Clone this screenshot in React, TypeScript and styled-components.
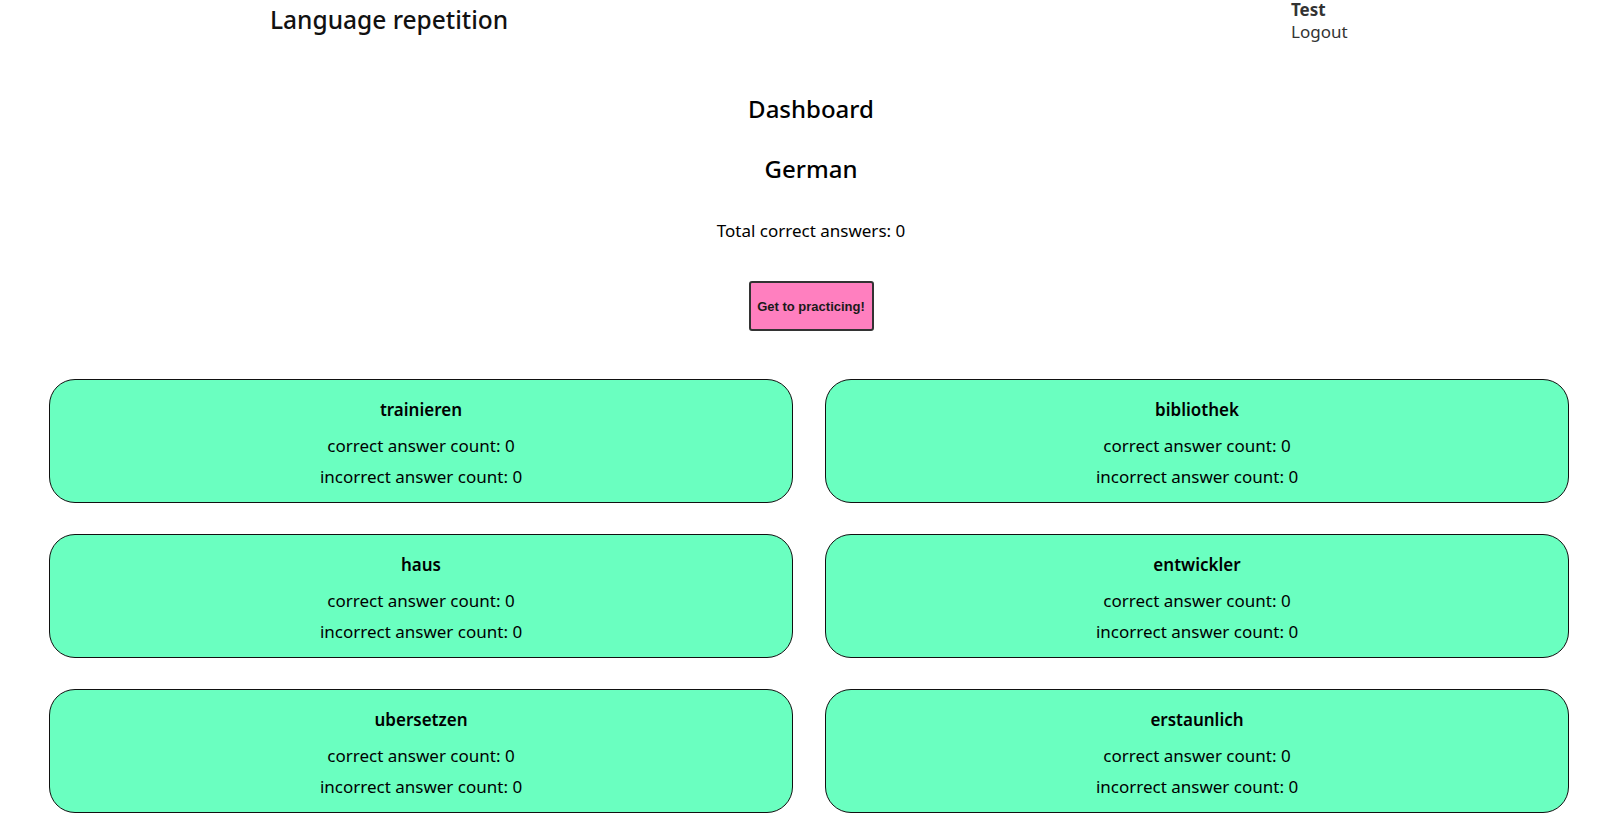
import React from 'react';
import styled, { createGlobalStyle } from 'styled-components';

const GlobalStyle = createGlobalStyle`
    body {
        margin: 0;
        font-family: "Noto Sans", "Open Sans", sans-serif;
        color: #000;
        background: #fff;
    }
`;

const Header = styled.header`
    display: flex;
    justify-content: space-between;
    align-items: flex-start;
    padding: 0 273px 0 270px;
    height: 44px;
`;

const AppTitle = styled.div`
    font-size: 24.5px;
    font-weight: 500;
    line-height: 40px;
    color: #111;
`;

const UserBox = styled.div`
    display: flex;
    flex-direction: column;
    font-size: 17px;
    line-height: 22px;
    color: #333;
    margin-top: -1px;
    width: 58px;
`;

const UserName = styled.div`
    font-weight: bold;
`;

const LogoutLink = styled.a`
    color: #333;
    text-decoration: none;
    cursor: pointer;
`;

const Main = styled.main`
    display: flex;
    flex-direction: column;
    align-items: center;
`;

const PageTitle = styled.h2`
    font-size: 24px;
    font-weight: 500;
    margin: 49px 0 0;
    line-height: 32px;
`;

const LanguageTitle = styled.h2`
    font-size: 24px;
    font-weight: 500;
    margin: 28px 0 0;
    line-height: 32px;
`;

const TotalText = styled.p`
    font-size: 17px;
    margin: 35px 0 0;
    line-height: 22px;
`;

const PracticeButton = styled.button`
    margin-top: 39px;
    width: 125px;
    height: 50px;
    background: #ff7fbf;
    border: 2px solid #333;
    border-radius: 3px;
    font-family: "Liberation Sans", Arial, sans-serif;
    font-weight: bold;
    font-size: 13px;
    color: #1a1a1a;
    cursor: pointer;
`;

const WordGrid = styled.div`
    display: grid;
    grid-template-columns: 1fr 1fr;
    column-gap: 32px;
    row-gap: 31px;
    padding: 48px 53px 40px 49px;
`;

const WordCard = styled.div`
    display: flex;
    flex-direction: column;
    align-items: center;
    height: 124px;
    box-sizing: border-box;
    padding-top: 18px;
    background: #6affc0;
    border: 1px solid #111;
    border-radius: 26px;
`;

const WordName = styled.div`
    font-size: 17px;
    font-weight: 600;
    line-height: 24px;
`;

const WordStat = styled.div<{ $gap: number }>`
    font-size: 17px;
    line-height: 22px;
    margin-top: ${(p) => p.$gap}px;
`;

const words = [
    { word: 'trainieren', correct: 0, incorrect: 0 },
    { word: 'bibliothek', correct: 0, incorrect: 0 },
    { word: 'haus', correct: 0, incorrect: 0 },
    { word: 'entwickler', correct: 0, incorrect: 0 },
    { word: 'ubersetzen', correct: 0, incorrect: 0 },
    { word: 'erstaunlich', correct: 0, incorrect: 0 },
];

const App: React.FC = () => {
    return (
        <>
            <GlobalStyle />
            <Header>
                <AppTitle>Language repetition</AppTitle>
                <UserBox>
                    <UserName>Test</UserName>
                    <LogoutLink>Logout</LogoutLink>
                </UserBox>
            </Header>
            <Main>
                <PageTitle>Dashboard</PageTitle>
                <LanguageTitle>German</LanguageTitle>
                <TotalText>Total correct answers: 0</TotalText>
                <PracticeButton>Get to practicing!</PracticeButton>
            </Main>
            <WordGrid>
                {words.map((item, index) => (
                    <WordCard key={index}>
                        <WordName>{item.word}</WordName>
                        <WordStat $gap={13}>correct answer count: {item.correct}</WordStat>
                        <WordStat $gap={9}>incorrect answer count: {item.incorrect}</WordStat>
                    </WordCard>
                ))}
            </WordGrid>
        </>
    );
};

export default App;
